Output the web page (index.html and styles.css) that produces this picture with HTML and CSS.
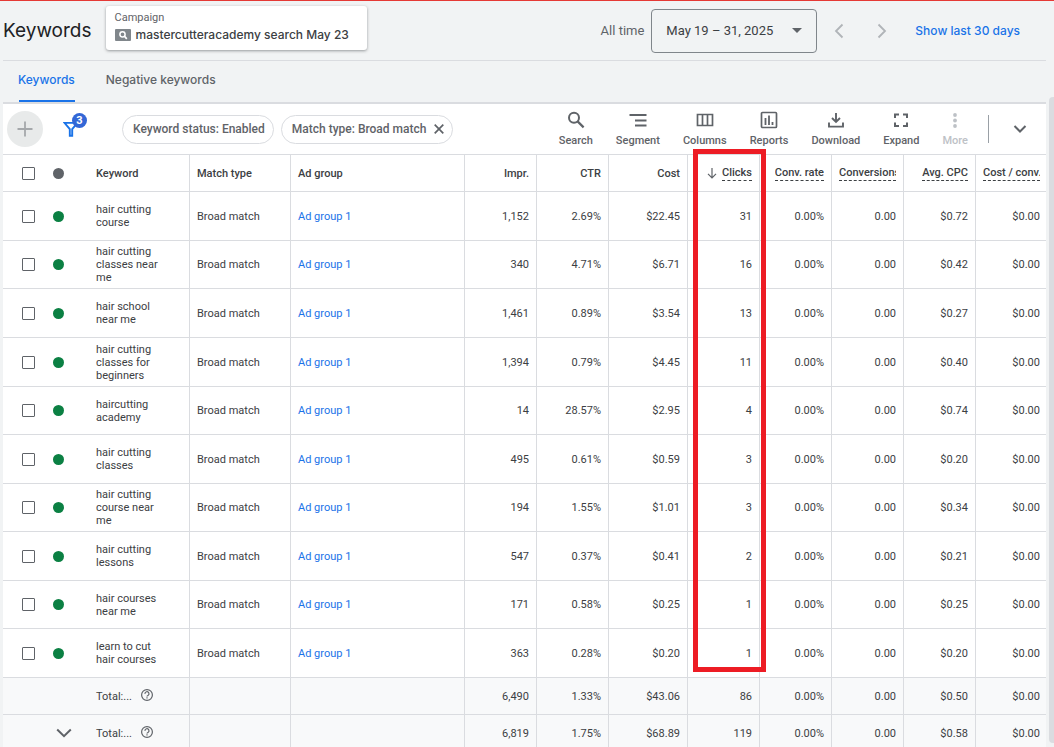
FILE: index.html
```html
<!DOCTYPE html>
<html lang="en">
<head>
<meta charset="utf-8">
<title>Keywords</title>
<link rel="stylesheet" href="styles.css">
</head>
<body>
<div class="app">
  <main class="page">
    <header class="header">
      <h1 class="title">Keywords</h1>
      <button class="campaign" type="button">
        <span class="campaign-label">Campaign</span>
        <span class="campaign-name">
          <svg width="16" height="12" viewBox="0 0 16 12"><rect width="16" height="12" rx="1" fill="#80868b"/><circle cx="7.5" cy="5.3" r="2.6" fill="none" stroke="#fff" stroke-width="1.5"/><path d="M9.4 7.2l2.4 2.6" stroke="#fff" stroke-width="1.7"/></svg>
          mastercutteracademy search May 23
        </span>
      </button>
      <div class="dates">
        <span class="all-time">All time</span>
        <button class="date-button" type="button">May 19 – 31, 2025
          <svg width="10" height="5" viewBox="0 0 10 5"><path d="M0 0h10L5 5z" fill="#5f6368"/></svg>
        </button>
        <button class="arrow" type="button" aria-label="Previous period"><svg width="10" height="16" viewBox="0 0 10 16"><path d="M8.500 1.500L2 8l6.500 6.500" fill="none" stroke="#b0b4b8" stroke-width="1.800"/></svg></button>
        <button class="arrow next" type="button" aria-label="Next period"><svg width="10" height="16" viewBox="0 0 10 16"><path d="M1.500 1.500L8 8l-6.500 6.500" fill="none" stroke="#b0b4b8" stroke-width="1.800"/></svg></button>
        <a class="last-days" href="#">Show last 30 days</a>
      </div>
    </header>
    <nav class="tabs">
      <a class="tab active" href="#">Keywords</a>
      <a class="tab" href="#">Negative keywords</a>
    </nav>
    <section class="panel">
      <div class="toolbar">
        <button class="add" type="button" aria-label="Add keywords"><svg width="16" height="16" viewBox="0 0 16 16"><path d="M8 .5v15M.5 8h15" stroke="#a5a8ab" stroke-width="1.800"/></svg></button>
        <button class="filter" type="button" aria-label="Filters">
          <svg width="16" height="16" viewBox="0 0 16 16"><path d="M1.500 1.900h13L9.200 8.200v6.500H6.800V8.200z" fill="none" stroke="#1a73e8" stroke-width="1.900"/></svg>
          <span class="badge">3</span>
        </button>
        <div class="chips">
          <button class="chip" type="button">Keyword status: Enabled</button>
          <button class="chip" type="button">Match type: Broad match
            <svg width="10" height="10" viewBox="0 0 10 10"><path d="M.7.7l8.600 8.600M9.300.7L.7 9.300" stroke="#5f6368" stroke-width="1.700"/></svg>
          </button>
        </div>
        <div class="tools">
          <button class="tool" type="button"><svg width="18" height="18" viewBox="0 0 18 18"><circle cx="7" cy="6.800" r="5" fill="none" stroke="currentColor" stroke-width="2"/><path d="M10.600 10.400l6 6" stroke="currentColor" stroke-width="2.200"/></svg>Search</button>
          <button class="tool" type="button"><svg width="18" height="18" viewBox="0 0 18 18"><path d="M.5 4h17M6 9.500h11.500M6 14.500h11.500" stroke="currentColor" stroke-width="1.800"/></svg>Segment</button>
          <button class="tool" type="button"><svg width="18" height="18" viewBox="0 0 18 18"><path d="M1.500 3.500h15v11h-15zM6.500 3.500v11M11.500 3.500v11" fill="none" stroke="currentColor" stroke-width="1.700"/></svg>Columns</button>
          <button class="tool" type="button"><svg width="18" height="18" viewBox="0 0 18 18"><rect x="1.500" y="1.500" width="15" height="15" rx="1" fill="none" stroke="currentColor" stroke-width="1.700"/><path d="M5.500 7v7M9 4.500V14M12.500 11v3" stroke="currentColor" stroke-width="1.800"/></svg>Reports</button>
          <button class="tool" type="button"><svg width="18" height="18" viewBox="0 0 18 18"><path d="M9 2v8.500M5 7l4 4 4-4M2 11.500V15.600h14V11.500" fill="none" stroke="currentColor" stroke-width="1.900"/></svg>Download</button>
          <button class="tool" type="button"><svg width="18" height="18" viewBox="0 0 18 18"><path d="M3 7V3.500h4M11 3.500h4V7M15 11.500V15h-4M7 15H3v-3.500" fill="none" stroke="currentColor" stroke-width="2"/></svg>Expand</button>
          <button class="tool" type="button" disabled><svg width="18" height="18" viewBox="0 0 18 18" fill="currentColor"><circle cx="9" cy="4" r="1.900"/><circle cx="9" cy="9.500" r="1.900"/><circle cx="9" cy="15" r="1.900"/></svg>More</button>
        </div>
        <button class="collapse" type="button" aria-label="Collapse"><svg width="14" height="10" viewBox="0 0 14 10"><path d="M1.500 2L7 7.500 12.500 2" fill="none" stroke="#5f6368" stroke-width="2"/></svg></button>
      </div>
      <div class="table-area">
        <table class="grid">
          <colgroup><col class="c-check"><col class="c-dot"><col class="c-text"><col class="c-text"><col><col class="c-num"><col class="c-num"><col class="c-cost"><col class="c-num"><col class="c-num"><col class="c-num"><col class="c-num"><col class="c-last"></colgroup>
          <thead>
            <tr>
              <th class="check"><input type="checkbox" aria-label="Select all"></th>
              <th class="status"><span class="dot grey"></span></th>
              <th class="kw">Keyword</th><th class="text">Match type</th><th class="text">Ad group</th>
              <th>Impr.</th><th>CTR</th><th>Cost</th>
              <th class="sorted"><svg width="10" height="11" viewBox="0 0 10 11"><path d="M5 0v9.500M1 5.800l4 4 4-4" fill="none" stroke="#5f6368" stroke-width="1.200"/></svg><span class="hint">Clicks</span></th>
              <th><span class="hint">Conv. rate</span></th><th><span class="hint">Conversions</span></th><th><span class="hint">Avg. CPC</span></th><th><span class="hint">Cost / conv.</span></th>
            </tr>
          </thead>
          <tbody>
            <tr><td class="check"><input type="checkbox" aria-label="hair cutting course"></td><td class="status"><span class="dot"></span></td><td class="kw">hair cutting course</td><td class="text">Broad match</td><td class="text"><a href="#">Ad group 1</a></td><td>1,152</td><td>2.69%</td><td>$22.45</td><td>31</td><td>0.00%</td><td>0.00</td><td>$0.72</td><td>$0.00</td></tr>
            <tr><td class="check"><input type="checkbox" aria-label="hair cutting classes near me"></td><td class="status"><span class="dot"></span></td><td class="kw">hair cutting classes near me</td><td class="text">Broad match</td><td class="text"><a href="#">Ad group 1</a></td><td>340</td><td>4.71%</td><td>$6.71</td><td>16</td><td>0.00%</td><td>0.00</td><td>$0.42</td><td>$0.00</td></tr>
            <tr><td class="check"><input type="checkbox" aria-label="hair school near me"></td><td class="status"><span class="dot"></span></td><td class="kw">hair school near me</td><td class="text">Broad match</td><td class="text"><a href="#">Ad group 1</a></td><td>1,461</td><td>0.89%</td><td>$3.54</td><td>13</td><td>0.00%</td><td>0.00</td><td>$0.27</td><td>$0.00</td></tr>
            <tr><td class="check"><input type="checkbox" aria-label="hair cutting classes for beginners"></td><td class="status"><span class="dot"></span></td><td class="kw">hair cutting classes for beginners</td><td class="text">Broad match</td><td class="text"><a href="#">Ad group 1</a></td><td>1,394</td><td>0.79%</td><td>$4.45</td><td>11</td><td>0.00%</td><td>0.00</td><td>$0.40</td><td>$0.00</td></tr>
            <tr><td class="check"><input type="checkbox" aria-label="haircutting academy"></td><td class="status"><span class="dot"></span></td><td class="kw">haircutting academy</td><td class="text">Broad match</td><td class="text"><a href="#">Ad group 1</a></td><td>14</td><td>28.57%</td><td>$2.95</td><td>4</td><td>0.00%</td><td>0.00</td><td>$0.74</td><td>$0.00</td></tr>
            <tr><td class="check"><input type="checkbox" aria-label="hair cutting classes"></td><td class="status"><span class="dot"></span></td><td class="kw">hair cutting classes</td><td class="text">Broad match</td><td class="text"><a href="#">Ad group 1</a></td><td>495</td><td>0.61%</td><td>$0.59</td><td>3</td><td>0.00%</td><td>0.00</td><td>$0.20</td><td>$0.00</td></tr>
            <tr><td class="check"><input type="checkbox" aria-label="hair cutting course near me"></td><td class="status"><span class="dot"></span></td><td class="kw">hair cutting course near me</td><td class="text">Broad match</td><td class="text"><a href="#">Ad group 1</a></td><td>194</td><td>1.55%</td><td>$1.01</td><td>3</td><td>0.00%</td><td>0.00</td><td>$0.34</td><td>$0.00</td></tr>
            <tr><td class="check"><input type="checkbox" aria-label="hair cutting lessons"></td><td class="status"><span class="dot"></span></td><td class="kw">hair cutting lessons</td><td class="text">Broad match</td><td class="text"><a href="#">Ad group 1</a></td><td>547</td><td>0.37%</td><td>$0.41</td><td>2</td><td>0.00%</td><td>0.00</td><td>$0.21</td><td>$0.00</td></tr>
            <tr><td class="check"><input type="checkbox" aria-label="hair courses near me"></td><td class="status"><span class="dot"></span></td><td class="kw">hair courses near me</td><td class="text">Broad match</td><td class="text"><a href="#">Ad group 1</a></td><td>171</td><td>0.58%</td><td>$0.25</td><td>1</td><td>0.00%</td><td>0.00</td><td>$0.25</td><td>$0.00</td></tr>
            <tr><td class="check"><input type="checkbox" aria-label="learn to cut hair courses"></td><td class="status"><span class="dot"></span></td><td class="kw">learn to cut hair courses</td><td class="text">Broad match</td><td class="text"><a href="#">Ad group 1</a></td><td>363</td><td>0.28%</td><td>$0.20</td><td>1</td><td>0.00%</td><td>0.00</td><td>$0.20</td><td>$0.00</td></tr>
          </tbody>
          <tfoot>
            <tr><td class="check"></td><td class="status"></td><td class="kw"><span class="total">Total:... <svg width="14" height="14" viewBox="0 0 14 14"><circle cx="7" cy="6" r="5.400" fill="none" stroke="#5f6368" stroke-width="1.200"/><path d="M5 4.900a2 2 0 1 1 3 1.500C7.300 6.800 7 7 7 7.600M7 8.300v1.200" fill="none" stroke="#5f6368" stroke-width="1.200"/></svg></span></td><td class="text"></td><td class="text"></td><td>6,490</td><td>1.33%</td><td>$43.06</td><td>86</td><td>0.00%</td><td>0.00</td><td>$0.50</td><td>$0.00</td></tr>
            <tr><td class="check"></td><td class="status"><button class="expand-total" type="button" aria-label="Show totals"><svg width="16" height="10" viewBox="0 0 16 10"><path d="M1.200 1.500L8 8.200l6.800-6.700" fill="none" stroke="#5f6368" stroke-width="2"/></svg></button></td><td class="kw"><span class="total">Total:... <svg width="14" height="14" viewBox="0 0 14 14"><circle cx="7" cy="6" r="5.400" fill="none" stroke="#5f6368" stroke-width="1.200"/><path d="M5 4.900a2 2 0 1 1 3 1.500C7.300 6.800 7 7 7 7.600M7 8.300v1.200" fill="none" stroke="#5f6368" stroke-width="1.200"/></svg></span></td><td class="text"></td><td class="text"></td><td>6,819</td><td>1.75%</td><td>$68.89</td><td>119</td><td>0.00%</td><td>0.00</td><td>$0.58</td><td>$0.00</td></tr>
          </tfoot>
        </table>
        <div class="highlight"></div>
      </div>
    </section>
  </main>
  <div class="scrollbar"><div class="thumb"></div></div>
</div>
</body>
</html>
```
FILE: styles.css
```css
* { box-sizing: border-box; }
body {
  margin: 0;
  height: 100vh;
  overflow: hidden;
  background: #f1f3f4;
  color: #3c4043;
  font: 11px/13px Roboto, sans-serif;
}
button {
  margin: 0;
  padding: 0;
  border: 0;
  background: none;
  color: inherit;
  font: inherit;
}
a { color: #1a73e8; text-decoration: none; }
svg { display: block; flex: none; }

.app {
  display: flex;
  height: 100vh;
  padding-left: 3px;
  border-top: 1px solid #e53935;
  background: #f1f3f4;
}
.page { flex: 1; min-width: 0; }

.header {
  display: flex;
  align-items: center;
  height: 60px;
  border-bottom: 1px solid #dadce0;
}
.title {
  margin: 0;
  color: #202124;
  font: 400 19px/24px Inter, sans-serif;
}
.campaign {
  display: flex;
  flex-direction: column;
  gap: 3px;
  min-width: 261px;
  height: 44px;
  margin: 0 0 6px 14px;
  padding: 5px 9px;
  border-radius: 3px;
  background: #fff;
  box-shadow: 0 1px 3px rgba(60, 64, 67, .5);
  text-align: left;
}
.campaign-label { color: #5f6368; font-size: 11px; line-height: 13px; }
.campaign-name {
  display: flex;
  align-items: center;
  gap: 5px;
  color: #3c4043;
  font: 500 12px/16px Inter, sans-serif;
  white-space: nowrap;
}
.dates {
  display: flex;
  align-items: center;
  margin-left: auto;
  padding-right: 26px;
  white-space: nowrap;
}
.all-time { color: #5f6368; font-size: 13px; }
.date-button {
  display: flex;
  align-items: center;
  justify-content: space-between;
  width: 166px;
  height: 44px;
  margin: 0 17px 0 7px;
  padding: 0 14px;
  border: 1px solid #80868b;
  border-radius: 4px;
  font-size: 13px;
}
.next { margin: 0 28px 0 33px; }
.last-days { font: 500 12px/16px Inter, sans-serif; }

.tabs {
  display: flex;
  gap: 31px;
  height: 43px;
  padding-left: 15px;
  border-bottom: 2px solid #dadce0;
}
.tab {
  position: relative;
  color: #5f6368;
  font: 500 12px/16px Inter, sans-serif;
  padding-top: 11px;
}
.active { color: #1a73e8; }
.active::after {
  content: "";
  position: absolute;
  right: 0;
  bottom: 0;
  left: 1px;
  height: 2px;
  background: #1a73e8;
}

.panel { background: #fff; }
.toolbar {
  display: flex;
  align-items: center;
  height: 51px;
  padding-left: 4px;
  border-bottom: 1px solid #dadce0;
  color: #5f6368;
}
.add {
  display: grid;
  place-items: center;
  width: 36px;
  height: 36px;
  border-radius: 50%;
  background: #e8eaea;
}
.filter { position: relative; margin-left: 20px; }
.badge {
  position: absolute;
  top: -8px;
  left: 9px;
  width: 15px;
  height: 15px;
  border-radius: 50%;
  background: #3367d6;
  color: #fff;
  font: 700 11px/15px Roboto, sans-serif;
}
.chips { display: flex; gap: 7px; margin-left: 43px; }
.chip {
  display: flex;
  align-items: center;
  gap: 8px;
  height: 29px;
  padding: 0 8px 0 10px;
  border: 1px solid #dadce0;
  border-radius: 15px;
  font-size: 12px;
  font-weight: 500;
  white-space: nowrap;
}
.tools { display: flex; gap: 23px; margin-left: auto; }
.tool {
  display: flex;
  flex-direction: column;
  align-items: center;
  gap: 5px;
  font-weight: 500;
}
.tool:disabled { color: #bdc1c6; }
.collapse {
  display: grid;
  place-items: center;
  width: 58px;
  height: 28px;
  margin-left: 20px;
  padding-left: 5px;
  border-left: 1px solid #9aa0a6;
}

.table-area { position: relative; }
.grid {
  width: 100%;
  border-spacing: 0;
  table-layout: fixed;
}
.c-check, .c-dot { width: 43px; }
.c-text { width: 101px; }
.c-num { width: 72px; }
.c-cost { width: 79px; }
.c-last { width: 70px; }
.grid th, .grid td {
  height: 49px;
  padding: 0 7px;
  border-right: 1px solid #dadce0;
  border-bottom: 1px solid #dadce0;
  overflow: hidden;
  text-align: right;
  vertical-align: middle;
}
.grid th { height: 37px; font-weight: 500; white-space: nowrap; }
.grid tbody tr:nth-child(2) td,
.grid tbody tr:nth-child(2n+5) td { height: 48px; }
.grid tfoot td { height: 37px; background: #f8f9fa; }
.grid th:last-child, .grid td:last-child { padding-right: 6px; border-right: 0; }
.grid .check, .grid .status { border-right: 0; text-align: left; }
.grid .check { padding: 0 0 0 19px; }
.grid .status { padding: 0 0 0 7px; }
.grid .text { text-align: left; }
.grid .kw { padding: 0 29px 0 7px; text-align: left; }
.grid input {
  display: block;
  appearance: none;
  width: 13px;
  height: 13px;
  margin: 0;
  border: 1px solid #5f6368;
  border-radius: 1px;
  background: #fff;
}
.dot {
  display: block;
  width: 11px;
  height: 11px;
  border-radius: 50%;
  background: #0b8043;
}
.grey { background: #5f6368; }
.hint {
  display: inline-block;
  max-width: 100%;
  overflow: hidden;
  border-bottom: 1px dashed #3c4043;
  line-height: 15px;
  vertical-align: middle;
}
.sorted svg { display: inline-block; margin-right: 5px; vertical-align: middle; }
.total { display: flex; align-items: center; gap: 8px; white-space: nowrap; }
.expand-total { display: block; margin-left: 3px; }
.highlight {
  position: absolute;
  top: -6px;
  right: 280px;
  width: 73px;
  height: 523px;
  border: 5px solid #ed1c24;
  pointer-events: none;
}

.scrollbar { width: 8px; padding: 96px 0 4px 3px; }
.thumb { height: 100%; border-radius: 4px 0 0 4px; background: #dadce0; }
```
